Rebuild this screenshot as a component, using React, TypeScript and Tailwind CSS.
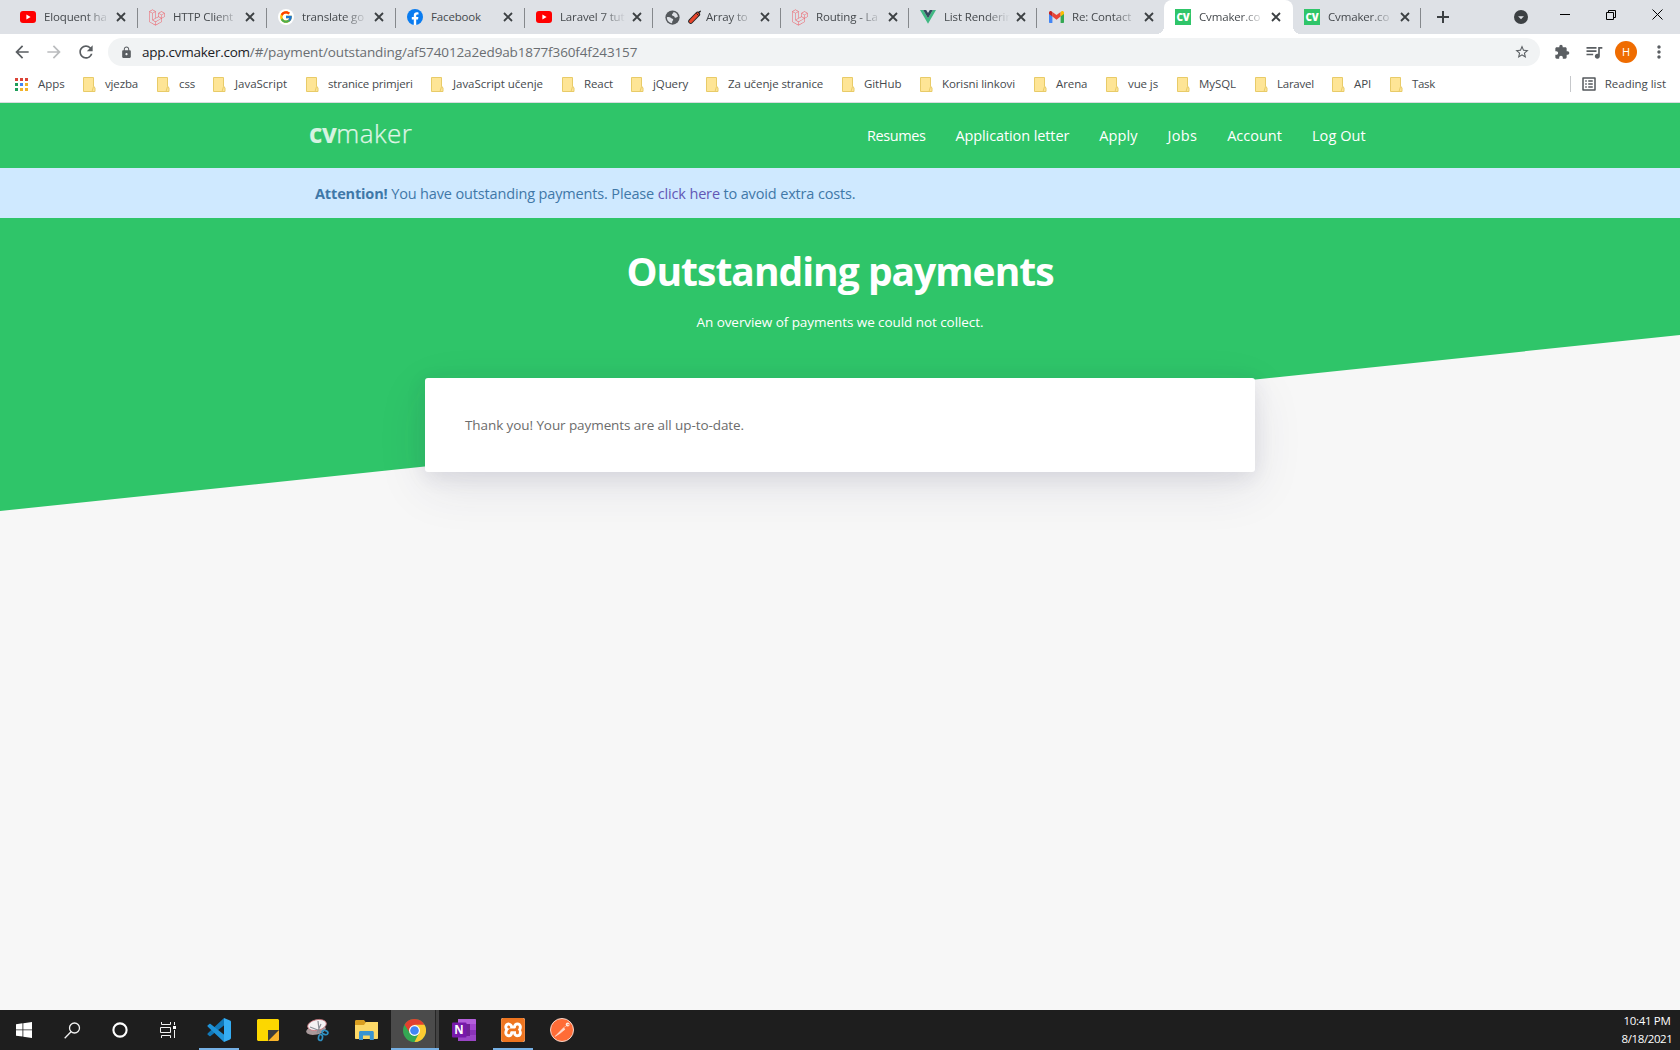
import React from "react";
import {
  MdArrowBack,
  MdArrowForward,
  MdRefresh,
  MdLock,
  MdStarOutline,
  MdExtension,
  MdQueueMusic,
  MdMoreVert,
  MdOutlineListAlt,
  MdArrowDropDown,
} from "react-icons/md";
import { FaLaravel } from "react-icons/fa";
import { FcGoogle } from "react-icons/fc";
import { SiXampp } from "react-icons/si";

const YouTubeIcon = () => (
  <svg width="16" height="12" viewBox="0 0 16 12">
    <rect width="16" height="12" rx="3" fill="#f00" />
    <path d="M6.4 3.6v4.8L10.6 6z" fill="#fff" />
  </svg>
);

const LaravelIcon = () => <FaLaravel size={17} color="#ee5d66" />;

const GoogleIcon = () => (
  <span className="flex size-4 items-center justify-center rounded-full bg-white">
    <FcGoogle size={14} />
  </span>
);

const FacebookIcon = () => (
  <svg width="16" height="16" viewBox="0 0 16 16">
    <circle cx="8" cy="8" r="8" fill="#0a7cf0" />
    <path d="M6.8 16v-5.6h-2V8h2V6.3c0-2 1.2-3.1 3-3.1.6 0 1.3.1 1.7.2v2h-1c-1 0-1.3.6-1.3 1.2V8h2.2l-.4 2.4H9.200V16z" fill="#fff" />
  </svg>
);

const GlobeIcon = () => (
  <svg width="15" height="15" viewBox="0 0 16 16">
    <circle cx="8" cy="8" r="7.600" fill="#54585c" />
    <path d="M9 2c2.600.4 4.600 2.500 4.800 5-1.200.6-1.500 1.500-2.800 1.200-1.100-.3-.8-1.700-2-1.900-1-.2-1.800-.6-1.600-1.600.2-1.100 1.700-.9 1.600-2.700zM2 7.800c1.600-.4 3.500-.3 4.500.8.700.9 2.200.6 2.300 1.700.1 1-1.200 1.100-1.100 2.200l-.2 1.600C4.400 13.900 2 11.200 2 7.800z" fill="#dee1e6" />
  </svg>
);

const FirecrackerIcon = () => (
  <svg width="14" height="14" viewBox="0 0 14 14" className="shrink-0">
    <path d="M2.700 11.300 9.600 4.200" stroke="#222" strokeWidth="5" strokeLinecap="round" />
    <path d="M2.700 11.300 9.600 4.200" stroke="#e8452c" strokeWidth="3.200" strokeLinecap="round" />
    <path d="M10.500 3.300c.2-1.200 1-1.900 2.300-2" stroke="#222" strokeWidth="1.400" fill="none" />
    <path d="M8.300 3.300l2.300 2.300" stroke="#222" strokeWidth="1" />
  </svg>
);

const VueIcon = () => (
  <svg width="16" height="14" viewBox="0 0 16 14">
    <path d="M0 0h3.200L8 8.300 12.800 0H16L8 13.800z" fill="#41b883" />
    <path d="M3.200 0h3L8 3.100 9.800 0h3L8 8.300z" fill="#35495e" />
  </svg>
);

const GmailIcon = () => (
  <svg width="15" height="12" viewBox="0 0 15 12">
    <path d="M0 1.800V11c0 .6.400 1 1 1h2.400V4.200z" fill="#4285f4" />
    <path d="M15 1.800V11c0 .6-.4 1-1 1h-2.400V4.200z" fill="#34a853" />
    <path d="M3.400 1v4.600L7.500 8.700l4.100-3.100V1L7.500 4z" fill="#ea4335" />
    <path d="M0 1.700C0 .1 1.700-.5 2.800.4l.6.500v4.700L0 3z" fill="#c5221f" />
    <path d="M15 1.700C15 .1 13.300-.5 12.200.4l-.6.500v4.700L15 3z" fill="#fbbc04" />
  </svg>
);

const CvIcon = () => (
  <span className="flex size-4 items-center justify-center bg-[#2fc569] text-[10px] font-extrabold leading-none tracking-[-0.2px] text-white">
    CV
  </span>
);

const tabs = [
  { icon: <YouTubeIcon />, title: "Eloquent ha", width: "w-[129px]" },
  { icon: <LaravelIcon />, title: "HTTP Client", width: "w-[129px]" },
  { icon: <GoogleIcon />, title: "translate go", width: "w-[129px]" },
  { icon: <FacebookIcon />, title: "Facebook", width: "w-[129px]" },
  { icon: <YouTubeIcon />, title: "Laravel 7 tut", width: "w-[128px]" },
  { icon: <GlobeIcon />, title: "Array to", emoji: true, width: "w-[128px]" },
  { icon: <LaravelIcon />, title: "Routing - La", width: "w-[128px]" },
  { icon: <VueIcon />, title: "List Renderin", width: "w-[128px]" },
  { icon: <GmailIcon />, title: "Re: Contact", width: "w-[127px]", beforeActive: true },
  { icon: <CvIcon />, title: "Cvmaker.co", width: "w-[129px]", active: true },
  { icon: <CvIcon />, title: "Cvmaker.co", width: "w-[128px]" },
];

function TabStrip() {
  return (
    <div className="flex h-[34px] bg-[#dee1e6] pl-[9px]">
      {tabs.map((t, i) => (
        <div
          key={i}
          className={`relative flex h-[34px] shrink-0 items-center pl-[11px] ${t.width} ${t.active ? "rounded-t-lg bg-white" : ""}`}
        >
          {t.active && (
            <>
              <span className="absolute bottom-0 -left-2 size-2 bg-[radial-gradient(circle_at_0_0,#dee1e6_8px,#fff_8px)]" />
              <span className="absolute bottom-0 -right-2 size-2 bg-[radial-gradient(circle_at_100%_0,#dee1e6_8px,#fff_8px)]" />
            </>
          )}
          <span className="flex w-4 justify-center">{t.icon}</span>
          <span
            className={`ml-2 flex w-[66px] items-center gap-1 whitespace-nowrap text-[11.5px] tracking-[-0.15px] text-[#45494d] ${t.title === "Facebook" ? "" : "[mask-image:linear-gradient(to_right,#000_42px,transparent_66px)]"}`}
          >
            {t.emoji && <FirecrackerIcon />}
            {t.title}
          </span>
          <svg className="ml-[6px] shrink-0 text-[#3c4043]" width="10" height="10" viewBox="0 0 10 10">
            <path d="M1 1l8 8M9 1l-8 8" stroke="currentColor" strokeWidth="1.800" />
          </svg>
          {!t.active && !t.beforeActive && <span className="absolute right-0 top-2 h-5 w-px bg-[#85888c]" />}
        </div>
      ))}
      <svg className="ml-[16px] mt-[11px] text-[#3c4043]" width="12" height="12" viewBox="0 0 12 12">
        <path d="M6 0v12M0 6h12" stroke="currentColor" strokeWidth="2" />
      </svg>
      <div className="ml-auto flex">
        <span className="mr-[30px] mt-[10px] flex size-[14px] items-center justify-center rounded-full bg-[#3c4043] text-[#dee1e6]">
          <MdArrowDropDown size={15} />
        </span>
        <svg className="mt-[9px] text-black" width="122" height="12" viewBox="0 0 122 12" fill="none" stroke="currentColor">
          <path d="M2 5.500h10" />
          <path d="M48.500 3.500h7v7h-7zM50.500 3.500v-2h7v7h-2" />
          <path d="M94.500 .5l10 10M104.500 .5l-10 10" />
        </svg>
      </div>
    </div>
  );
}

function Toolbar() {
  return (
    <div className="flex h-[36px] items-center bg-white text-[#5a5e62]">
      <MdArrowBack className="ml-[12px]" size={20} />
      <MdArrowForward className="ml-[12px] text-[#babcbe]" size={20} />
      <MdRefresh className="ml-[12px]" size={20} />
      <div className="ml-[12px] flex h-7 w-[1432px] items-center rounded-full bg-[#f1f3f4] pl-[12px] pr-[10px]">
        <MdLock size={13} />
        <span className="ml-[9px] text-[13.5px] tracking-[-0.125px] text-[#6a6e72]">
          <span className="tracking-[-0.25px] text-[#202124]">app.cvmaker.com</span>
          /#/payment/outstanding/af574012a2ed9ab1877f360f4f243157
        </span>
        <MdStarOutline className="ml-auto" size={16} />
      </div>
      <MdExtension className="ml-[14px]" size={16} />
      <MdQueueMusic className="ml-[14px]" size={20} />
      <span className="ml-[11px] flex size-[22px] items-center justify-center rounded-full bg-[#ef6c00] text-[11px] text-white">
        H
      </span>
      <MdMoreVert className="ml-[12px]" size={20} />
    </div>
  );
}

const Folder = () => (
  <svg width="13" height="15" viewBox="0 0 13 15" className="shrink-0">
    <path d="M.5 .5h10v8.500l1.500 2v3.500H.5z" fill="#fee596" stroke="#e8cb68" />
    <path d="M10.500 9.500l-1.500 5" stroke="#e8cb68" fill="none" />
  </svg>
);

const bookmarks = [
  { label: "vjezba", cls: "w-[74px] tracking-[-0.154px]" },
  { label: "css", cls: "w-[56px] tracking-[-0.1px]" },
  { label: "JavaScript", cls: "w-[93px] tracking-[-0.017px]" },
  { label: "stranice primjeri", cls: "w-[125px] tracking-[-0.18px]" },
  { label: "JavaScript učenje", cls: "w-[131px] tracking-[-0.035px]" },
  { label: "React", cls: "w-[69px] tracking-[-0.1px]" },
  { label: "jQuery", cls: "w-[75px] tracking-[-0.1px]" },
  { label: "Za učenje stranice", cls: "w-[136px] tracking-[-0.1px]" },
  { label: "GitHub", cls: "w-[78px] tracking-[-0.1px]" },
  { label: "Korisni linkovi", cls: "w-[114px] tracking-[-0.1px]" },
  { label: "Arena", cls: "w-[72px] tracking-[-0.1px]" },
  { label: "vue js", cls: "w-[71px] tracking-[-0.1px]" },
  { label: "MySQL", cls: "w-[78px] tracking-[-0.07px]" },
  { label: "Laravel", cls: "w-[77px] tracking-[-0.25px]" },
  { label: "API", cls: "w-[58px] tracking-[-0.1px]" },
  { label: "Task", cls: "w-[60px] tracking-[-0.3px]" },
];

const appDots = [
  "bg-[#db4437]", "bg-[#db4437]", "bg-[#db4437]",
  "bg-[#1e9e5a]", "bg-[#4285f4]", "bg-[#f2b32a]",
  "bg-[#1e9e5a]", "bg-[#f2b32a]", "bg-[#f2b32a]",
];

function BookmarksBar() {
  return (
    <div className="flex h-[33px] items-center border-b border-[#d9dcdf] bg-white pb-[4px] text-[11.5px] text-[#45494d]">
      <div className="ml-[15px] flex w-[68px] items-center">
        <span className="grid grid-cols-3 gap-[2px]">
          {appDots.map((c, i) => (
            <span key={i} className={`size-[3px] ${c}`} />
          ))}
        </span>
        <span className="-mt-px ml-[10px]">Apps</span>
      </div>
      {bookmarks.map((b) => (
        <div key={b.label} className={`flex shrink-0 items-center whitespace-nowrap ${b.cls}`}>
          <Folder />
          <span className="-mt-px ml-[9px]">{b.label}</span>
        </div>
      ))}
      <div className="ml-auto mr-[14px] flex items-center">
        <span className="h-4 w-px bg-[#c6c8cb]" />
        <MdOutlineListAlt className="ml-[9px] text-[#54585c]" size={18} />
        <span className="-mt-px ml-[7px] tracking-[-0.03px]">Reading list</span>
      </div>
    </div>
  );
}

const nav = [
  { label: "Resumes", cls: "tracking-[-0.42px]" },
  { label: "Application letter", cls: "tracking-[-0.1px]" },
  { label: "Apply", cls: "tracking-[0.08px]" },
  { label: "Jobs", cls: "tracking-[0.3px]" },
  { label: "Account", cls: "" },
  { label: "Log Out", cls: "tracking-[0.1px]" },
];

function Page() {
  return (
    <main className="flex-1 bg-[#f7f7f7]">
      <header className="flex h-[65px] bg-[#2fc569] pl-[309px]">
        <div className="mt-[12px] w-[558px] text-[26px] leading-[36px] text-white/80">
          <span className="font-bold tracking-[-0.4px]">cv</span>
          <span className="font-light tracking-[0.45px] [-webkit-text-stroke:0.25px]">maker</span>
        </div>
        <nav className="flex h-[65px] items-center gap-[30px] text-[14.5px] text-white">
          {nav.map((n) => (
            <span key={n.label} className={`whitespace-nowrap ${n.cls}`}>
              {n.label}
            </span>
          ))}
        </nav>
      </header>
      <div className="flex h-[50px] items-center bg-[#cfe9ff] pl-[315px] pt-[2px] text-[14.5px] tracking-[-0.15px] text-[#3f78a8]">
        <p>
          <strong className="font-bold tracking-[-0.15px]">Attention!</strong> You have outstanding payments. Please{" "}
          <span className="text-[#6257b5]">click here</span> to avoid extra costs.
        </p>
      </div>
      <section className="h-[293px] bg-[#2fc569] text-center text-white [clip-path:polygon(0_0,100%_0,100%_117px,0_100%)]">
        <h1 className="pt-[25px] text-[39px] font-bold leading-[56px] tracking-[-1px]">Outstanding payments</h1>
        <p className="mt-[13px] text-[13.5px] leading-[20px] tracking-[-0.065px]">
          An overview of payments we could not collect.
        </p>
      </section>
      <div className="relative mx-auto -mt-[133px] flex h-[94px] w-[830px] items-center rounded-[3px] bg-white pl-10 text-[13.5px] tracking-[-0.085px] text-[#6c6c6c] shadow-[0_15px_50px_rgba(50,50,93,0.1),0_5px_20px_rgba(50,50,93,0.1)]">
        Thank you! Your payments are all up-to-date.
      </div>
    </main>
  );
}

const WindowsIcon = () => (
  <svg width="16" height="16" viewBox="0 0 16 16" fill="#fff">
    <path d="M0 2.200 6.500 1.300v6.200H0zM7.300 1.200 16 0v7.500H7.300zM0 8.300h6.500v6.300L0 13.700zM7.300 8.300H16V16l-8.700-1.200z" />
  </svg>
);

const SearchIcon = () => (
  <svg width="17" height="17" viewBox="0 0 17 17" fill="none" stroke="#f2f2f2" strokeWidth="1.300">
    <circle cx="10.500" cy="6" r="5" />
    <path d="M7 9.800.700 16.200" />
  </svg>
);

const CortanaIcon = () => (
  <svg width="16" height="16" viewBox="0 0 16 16">
    <circle cx="8" cy="8" r="6.600" fill="none" stroke="#fff" strokeWidth="2.100" />
  </svg>
);

const TaskViewIcon = () => (
  <svg width="17" height="16" viewBox="0 0 17 16" fill="none" stroke="#f2f2f2">
    <path d="M1.500 0v2.500h9V0M1.500 16v-2.500h9V16M.5 5.500h10v5H.5zM14.500 0v3M14.500 8v8" />
    <path d="M13 4h3v3h-3z" fill="#fff" stroke="none" />
  </svg>
);

const VsCodeIcon = () => (
  <svg width="24" height="24" viewBox="0 0 24 24">
    <path d="M17 0 .8 15.200c-.5.500-.5 1.100 0 1.500l1.500 1.300c.4.300.9.300 1.300 0L17.500 7z" fill="#1178b8" />
    <path d="M17 24 .8 8.800c-.5-.5-.5-1.100 0-1.500L2.300 6c.4-.3.900-.3 1.300 0L17.500 17z" fill="#1f93d8" />
    <path d="M17 0l6 2.600c.6.300 1 .8 1 1.400v16c0 .6-.4 1.100-1 1.400L17 24z" fill="#35adf3" />
  </svg>
);

const StickyIcon = () => (
  <svg width="22" height="22" viewBox="0 0 22 22">
    <path d="M1 0h20l1 1v10H11v11H1l-1-1V1z" fill="#fcd700" />
    <path d="M11 11h11L11 22z" fill="#3c3c3c" />
    <path d="M22 11v10l-1 1H11z" fill="#f9b52c" />
  </svg>
);

const SnipIcon = () => (
  <svg width="24" height="24" viewBox="0 0 24 24" fill="none">
    <ellipse cx="10" cy="12" rx="10" ry="4.500" transform="rotate(-12 10 12)" fill="#a9999b" />
    <ellipse cx="11" cy="7" rx="9.500" ry="5.300" transform="rotate(-12 11 7)" fill="#f4f1f3" stroke="#c9747c" strokeWidth=".8" />
    <path d="M12 3l1.500 13M4 9l13 5M15 6l-4 9" stroke="#8b8e96" strokeWidth="1.200" />
    <ellipse cx="19" cy="14.500" rx="3" ry="2" transform="rotate(20 19 14.500)" stroke="#2e8fc0" strokeWidth="1.700" />
    <ellipse cx="14.500" cy="19.500" rx="2" ry="3" transform="rotate(10 14.500 19.500)" stroke="#2e8fc0" strokeWidth="1.700" />
  </svg>
);

const ExplorerIcon = () => (
  <svg width="23" height="20" viewBox="0 0 23 20">
    <path d="M0 1.500C0 .7.500 0 1.300 0H9l2 2.500h10.500c.8 0 1 .5 1 1V10H0z" fill="#d99e20" />
    <path d="M0 5h9l2-3h12V18c0 .600-.4 1-1 1H1c-.600 0-1-.4-1-1z" fill="#fcd867" />
    <path d="M4 20v-7.500c0-1 .6-1.500 1.500-1.500h11.800c1 0 1.500.5 1.500 1.500V20h-4v-4.500H8V20z" fill="#3a94d2" />
  </svg>
);

const ChromeIcon = () => (
  <svg width="23" height="23" viewBox="0 0 24 24">
    <circle cx="12" cy="12" r="12" fill="#34a853" />
    <path d="M1.600 6A12 12 0 0 1 22.400 6L12 7 7.300 14.700z" fill="#e3402f" />
    <path d="M22.400 6A12 12 0 0 1 12 24l4.700-9.300L12 6z" fill="#fccb32" />
    <circle cx="12" cy="12" r="5.700" fill="#fff" />
    <circle cx="12" cy="12" r="4.500" fill="#4285f4" />
  </svg>
);

const OneNoteIcon = () => (
  <span className="relative block h-[22px] w-6">
    <svg width="24" height="22" viewBox="0 0 24 22">
      <path d="M6 0h17c.6 0 1 .4 1 1v20c0 .6-.4 1-1 1H6z" fill="#b45fdc" />
      <path d="M18 5h6v6h-6z" fill="#a346cf" />
      <path d="M18 11h6v5.500h-6z" fill="#8a33b8" />
      <path d="M6 16.500h18V21c0 .6-.4 1-1 1H6z" fill="#9a45c6" />
      <path d="M6 5h12v12H6z" fill="#702096" />
      <rect y="3.500" width="14.500" height="15" rx="1" fill="#7719aa" />
    </svg>
    <span className="absolute left-0 top-[3px] w-[14px] text-center text-[11.5px] font-bold leading-[15px] text-white">N</span>
  </span>
);

const XamppIcon = () => (
  <span className="flex size-6 items-center justify-center rounded-[2px] bg-white">
    <SiXampp size={24} color="#ee7520" />
  </span>
);

const PostmanIcon = () => (
  <svg width="24" height="24" viewBox="0 0 24 24">
    <circle cx="12" cy="12" r="11.500" fill="#ff6c37" stroke="#f4d8cd" />
    <path d="M5 18.500 13.500 9.800l1.600 1.400-5.200 4.200zM13.500 9.800l3-2" fill="#ffd9c9" stroke="#ffe9e0" strokeWidth=".5" />
    <circle cx="17.700" cy="6.500" r="2" fill="#ffe9e0" />
    <path d="M17.500 6.500l2.300.4" stroke="#ff6c37" strokeWidth=".8" />
  </svg>
);

const taskItems = [
  { icon: <WindowsIcon />, cls: "w-[48px]" },
  { icon: <SearchIcon />, cls: "w-[48px]" },
  { icon: <CortanaIcon />, cls: "w-[48px]" },
  { icon: <TaskViewIcon />, cls: "w-[48px]" },
  { icon: <VsCodeIcon />, cls: "mx-[7px] w-[40px] border-b-2 pt-[2px] border-[#76b0e4]" },
  { icon: <StickyIcon />, cls: "w-[43px]" },
  { icon: <SnipIcon />, cls: "ml-[5px] w-[48px]" },
  { icon: <ExplorerIcon />, cls: "mr-px w-[48px]" },
  { icon: <ChromeIcon />, cls: "w-[48px] border-b-2 border-[#76b0e4] bg-[linear-gradient(to_right,#4b4b4b_44px,#262626_44px,#262626_45px,#434343_45px)] pt-[2px] pr-[1px]" },
  { icon: <OneNoteIcon />, cls: "w-[50px]" },
  { icon: <XamppIcon />, cls: "ml-[4px] w-[40px] border-b-2 pt-[2px] border-[#76b0e4]" },
  { icon: <PostmanIcon />, cls: "ml-[5px] w-[48px]" },
];

function Taskbar() {
  return (
    <footer className="flex h-10 bg-[#1e1e1e] text-white">
      {taskItems.map((t, i) => (
        <div key={i} className={`flex h-10 shrink-0 items-center justify-center ${t.cls}`}>
          {t.icon}
        </div>
      ))}
      <div className="ml-auto mr-[6px] w-[54px] pt-[2px] text-center text-[11.5px] leading-[18px]">
        <div className="tracking-[-0.32px]">10:41 PM</div>
        <div className="tracking-[-0.38px]">8/18/2021</div>
      </div>
    </footer>
  );
}

export default function App() {
  return (
    <div className="flex h-[1050px] w-[1680px] flex-col overflow-hidden font-['Open_Sans','Noto_Sans',sans-serif]">
      <TabStrip />
      <Toolbar />
      <BookmarksBar />
      <Page />
      <Taskbar />
    </div>
  );
}
